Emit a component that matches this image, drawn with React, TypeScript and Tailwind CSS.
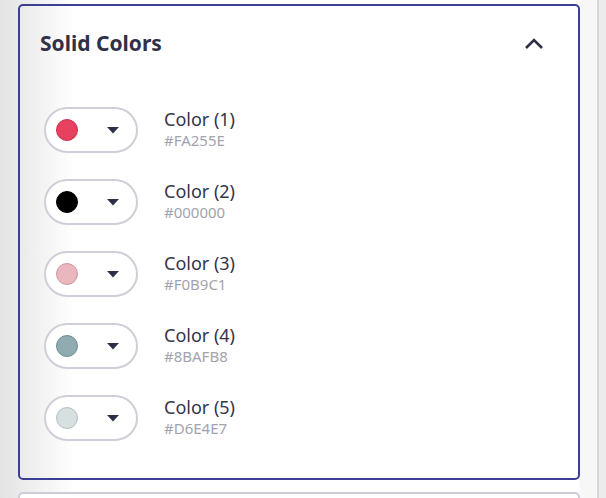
const colors = [
  { name: "Color (1)", hex: "#FA255E", fill: "#e8405f", ring: "#c8334f" },
  { name: "Color (2)", hex: "#000000", fill: "#000000", ring: "#000000" },
  { name: "Color (3)", hex: "#F0B9C1", fill: "#e9b7bd", ring: "#c99aa0" },
  { name: "Color (4)", hex: "#8BAFB8", fill: "#90abb2", ring: "#6f8c94" },
  { name: "Color (5)", hex: "#D6E4E7", fill: "#d6e0e1", ring: "#b3c0c2" },
];

const ColorRow = ({ c }: { c: (typeof colors)[number] }) => (
  <div className="flex items-center gap-[26px]">
    <button className="flex items-center h-[46px] w-[94px] rounded-full border-2 border-[#cfcfd9] bg-white pl-[10px]">
      <span
        className="block w-[22px] h-[22px] rounded-full border"
        style={{ backgroundColor: c.fill, borderColor: c.ring }}
      />
      <svg width="12" height="7" viewBox="0 0 12 7" className="ml-[29px]">
        <path d="M0 0 L12 0 L6 6.5 Z" fill="#2e2f45" />
      </svg>
    </button>
    <div className="flex flex-col -mt-[3px]">
      <span className="text-[18px] leading-[24px] text-[#33354d]">{c.name}</span>
      <span className="text-[15px] leading-[19px] text-[#a3a3ad]">{c.hex}</span>
    </div>
  </div>
);

export default function App() {
  return (
    <div
      className="flex w-[606px] h-[498px] overflow-hidden"
      style={{ fontFamily: "'Noto Sans', sans-serif" }}
    >
      <div className="w-[597px] pl-[18px] pr-[17px] pt-[4px] bg-[linear-gradient(to_right,#e3e3e3,#ffffff_75px,#ffffff_579px,#f7f7f7_580px)]">
        <div className="h-[476px] rounded-[5px] border-2 border-[#3d3f96]">
          <div className="flex items-center justify-between h-[76px] pl-5 pr-[34px]">
            <h2 className="text-[21px] font-bold text-[#2f3148]">Solid Colors</h2>
            <svg width="20" height="12" viewBox="0 0 20 12">
              <path d="M2 10 L10 2 L18 10" fill="none" stroke="#2e2f45" strokeWidth="2.6" />
            </svg>
          </div>
          <div className="flex flex-col gap-[26px] pl-6 pt-[25px]">
            {colors.map((c) => (
              <ColorRow key={c.hex} c={c} />
            ))}
          </div>
        </div>
        <div className="mt-[12px] h-[40px] rounded-[5px] border-2 border-[#cdcdd6] bg-white" />
      </div>
      <div className="w-[2px] bg-[#d5d5dd]" />
      <div className="flex-1 bg-[#ececec]" />
    </div>
  );
}
